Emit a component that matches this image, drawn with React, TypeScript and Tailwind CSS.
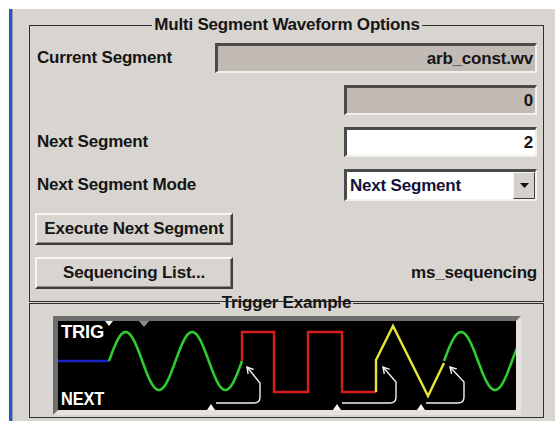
import React from "react";

// sunken read-only / edit field
function Field({ children, className }: { children: React.ReactNode; className: string }) {
  return (
    <div
      className={`h-full flex items-center justify-end pr-[2px] border-t-[3px] border-l-[3px] border-b-2 border-r-2 border-t-[#4b4b4b] border-l-[#4b4b4b] border-b-[#f2f0ed] border-r-[#f2f0ed] ${className}`}
    >
      {children}
    </div>
  );
}

function RaisedButton({ children }: { children: React.ReactNode }) {
  return (
    <button className="-ml-[2px] h-full w-[198px] bg-[#d8d4cf] border-2 border-t-[#f7f6f4] border-l-[#f7f6f4] border-b-[#3d3d3d] border-r-[#3d3d3d] shadow-[inset_-1px_-1px_0_#8e8b87] flex items-center justify-center font-bold">
      {children}
    </button>
  );
}

function Dropdown({ value }: { value: string }) {
  return (
    <div className="h-full w-[193px] flex bg-white border-t-[3px] border-l-[3px] border-b-2 border-r-2 border-t-[#4b4b4b] border-l-[#4b4b4b] border-b-[#f2f0ed] border-r-[#f2f0ed]">
      <div className="flex-1 flex items-center pl-[3px] text-[#12123a]">{value}</div>
      <div className="w-[22px] bg-[#d4d0cb] border border-t-[#f4f3f1] border-l-[#f4f3f1] border-b-[#3d3d3d] border-r-[#3d3d3d] flex items-center justify-center">
        <svg width="9" height="5" viewBox="0 0 9 5">
          <path d="M0 0 H9 L4.5 5 Z" fill="#111" />
        </svg>
      </div>
    </div>
  );
}

// simple sampled sine, starts at centre going up
function sinePath(x0: number, x1: number, period: number, cy: number, amp: number) {
  let d = "";
  for (let x = x0; x <= x1; x += 1) {
    const y = cy - amp * Math.sin((2 * Math.PI * (x - x0)) / period);
    d += `${x === x0 ? "M" : "L"}${x} ${y.toFixed(1)} `;
  }
  return d;
}

function TriggerGraphic() {
  const arrows = [
    { hx0: 158, vx: 202, vtop: 62, tip: [189, 46] },
    { hx0: 284, vx: 338, vtop: 61, tip: [325, 46] },
    { hx0: 368, vx: 406, vtop: 61, tip: [392, 46] },
  ];
  const markers = [153, 279, 363];
  return (
    <svg width="458" height="89" viewBox="0 0 458 89" className="block bg-black">
      <path d="M0 40 H51" stroke="#1c22c8" strokeWidth="2.5" fill="none" />
      <path d={sinePath(51, 184, 66.5, 40, 29)} stroke="#2ecc2e" strokeWidth="2.6" fill="none" strokeLinejoin="round" />
      <path
        d="M184 40 V11 H216 V71 H250 V11 H284 V71 H318"
        stroke="#d61e1e"
        strokeWidth="2.4"
        fill="none"
      />
      <path d="M318 71 V39 L335 5 L370 75 L386 42" stroke="#e6e63a" strokeWidth="2.4" fill="none" strokeLinejoin="miter" />
      <path d={sinePath(386, 460, 68, 40, 29)} stroke="#2ecc2e" strokeWidth="2.6" fill="none" strokeLinejoin="round" />

      {arrows.map((a, i) => {
        const [tx, ty] = a.tip;
        const dx = a.vx - tx;
        const dy = a.vtop - ty;
        const len = Math.hypot(dx, dy);
        const ux = dx / len;
        const uy = dy / len;
        const c = Math.cos(Math.PI / 6);
        const s = Math.sin(Math.PI / 6);
        const w1 = [tx + 7 * (ux * c - uy * s), ty + 7 * (ux * s + uy * c)];
        const w2 = [tx + 7 * (ux * c + uy * s), ty + 7 * (-ux * s + uy * c)];
        return (
          <g key={i} stroke="#f2f2f2" strokeWidth="1.4" fill="none">
            <path d={`M${a.hx0} 82 H${a.vx - 6} Q${a.vx} 82 ${a.vx} 76 V${a.vtop} L${tx} ${ty}`} />
            <path d={`M${w1[0].toFixed(1)} ${w1[1].toFixed(1)} L${tx} ${ty} L${w2[0].toFixed(1)} ${w2[1].toFixed(1)}`} />
          </g>
        );
      })}

      {markers.map((m) => (
        <path key={m} d={`M${m - 4} 89 L${m + 4} 89 L${m} 83 Z`} fill="#f4f4f4" />
      ))}
      <path d="M47 0 H55 L51 5 Z" fill="#f4f4f4" />
      <path d="M81 0 H91 L86 6 Z" fill="#8c8c8c" />

      <text x="3" y="17" fill="#fff" fontWeight="bold" fontSize="18" fontFamily="'Liberation Sans', Arial, sans-serif" textLength="43" lengthAdjust="spacingAndGlyphs">
        TRIG
      </text>
      <text x="3" y="84" fill="#fff" fontWeight="bold" fontSize="18" fontFamily="'Liberation Sans', Arial, sans-serif" textLength="43" lengthAdjust="spacingAndGlyphs">
        NEXT
      </text>
    </svg>
  );
}

export default function App() {
  return (
    <div className="w-[555px] h-[421px] bg-white pt-[9px] pl-[9px] flex overflow-hidden font-['Liberation_Sans',Arial,Helvetica,sans-serif] text-[17px] tracking-[-0.2px] text-[#151515]">
      <div className="w-[3px] bg-[#2457d6]" />
      <div className="w-px bg-[#9c9c9c]" />
      <div className="flex-1 bg-[#d8d4cf] pt-[6px]">
        <fieldset className="ml-4 w-[515px] border border-[#2f2f2f] pl-[7px] pr-[6px] pt-2 pb-3">
          <legend className="mx-auto px-[2px] leading-[20px] font-bold">Multi Segment Waveform Options</legend>
          <div className="flex flex-col gap-3 font-bold">
            <div className="h-[30px] flex items-center justify-between">
              <span>Current Segment</span>
              <Field className="w-[322px] bg-[#c2bab5]">arb_const.wv</Field>
            </div>
            <div className="h-[30px] flex justify-end">
              <Field className="w-[193px] bg-[#c2bab5]">0</Field>
            </div>
            <div className="h-[30px] flex items-center justify-between">
              <span>Next Segment</span>
              <Field className="w-[193px] bg-white">2</Field>
            </div>
            <div className="h-[32px] flex items-center justify-between">
              <span>Next Segment Mode</span>
              <Dropdown value="Next Segment" />
            </div>
            <div className="h-[32px] flex">
              <RaisedButton>Execute Next Segment</RaisedButton>
            </div>
            <div className="h-[32px] flex items-center justify-between">
              <RaisedButton>Sequencing List...</RaisedButton>
              <span>ms_sequencing</span>
            </div>
          </div>
        </fieldset>

        <fieldset className="-mt-[9px] ml-4 w-[515px] border border-[#2f2f2f] pt-[3px] pb-[2px]">
          <legend className="mx-auto px-[2px] leading-[20px] font-bold">Trigger Example</legend>
          <div className="mx-auto w-fit border-[5px] border-t-[#6e6e6e] border-l-[#6e6e6e] border-b-[#e6e3df] border-r-[#e6e3df]">
            <TriggerGraphic />
          </div>
        </fieldset>
      </div>
    </div>
  );
}
